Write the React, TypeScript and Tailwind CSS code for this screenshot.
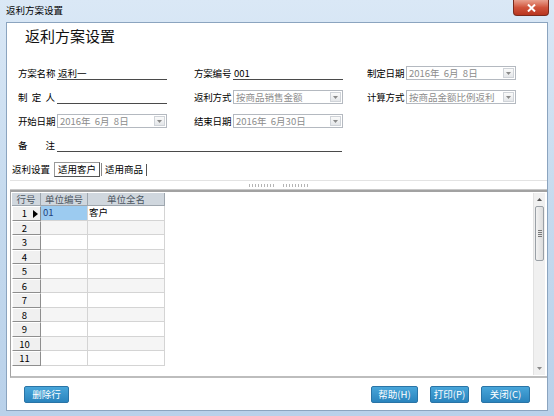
import type { ReactNode } from 'react'

// Win7-style dialog: 返利方案设置

function Label({ children, spread }: { children: string; spread?: boolean }) {
  if (spread) {
    return (
      <span className="flex w-[37px] shrink-0 justify-between mr-[2px] text-[9.5px] leading-[12px] whitespace-nowrap">
        {children.split('').map((c, i) => (
          <span key={i}>{c}</span>
        ))}
      </span>
    )
  }
  return <span className="w-[39px] shrink-0 text-[9.5px] leading-[12px] whitespace-nowrap tracking-[-0.2px]">{children}</span>
}

function Line({ value, width = 'w-[110px]' }: { value?: string; width?: string }) {
  return (
    <div className={`${width} h-[13px] border-b border-[#4a4a4a] text-[9.5px] leading-[12px] pl-[1px] text-black whitespace-nowrap`}>
      {value}
    </div>
  )
}

function Arrow() {
  return (
    <svg width="5" height="3" viewBox="0 0 5 3">
      <path d="M0 0h5L2.5 3z" fill="#8a8a8a" />
    </svg>
  )
}

function Combo({ value }: { value: string }) {
  return (
    <div className="w-[110px] h-[14px] border border-[#b4b9c0] bg-white flex items-center">
      <span className="flex-1 pl-[2px] text-[9.5px] leading-[12px] text-[#8c8c8c] whitespace-pre">{value}</span>
      <span className="w-[11px] h-[10px] mr-[1px] border border-[#cfd3d8] bg-gradient-to-b from-[#fafafa] to-[#e4e6e9] flex items-center justify-center">
        <Arrow />
      </span>
    </div>
  )
}

function Row({ children }: { children: ReactNode }) {
  return <div className="flex items-center h-[24px] pl-[11px]">{children}</div>
}

function Col({ children, w }: { children: ReactNode; w: string }) {
  return <div className={`flex items-center ${w} shrink-0`}>{children}</div>
}

function BlueButton({ children, w }: { children: string; w: string }) {
  return (
    <button
      className={`${w} h-[17px] rounded-[2px] border border-[#2a74a6] bg-gradient-to-b from-[#48a6da] to-[#2a84bd] text-[9.5px] leading-[15px] text-white whitespace-nowrap`}
    >
      {children}
    </button>
  )
}

const ROWS = Array.from({ length: 11 }, (_, i) => i + 1)

function ScrollBar() {
  return (
    <div className="w-[12px] flex flex-col bg-[#f0f0f0] border-l border-[#e2e2e2]">
      <div className="h-[13px] flex items-center justify-center">
        <svg width="5" height="3" viewBox="0 0 5 3">
          <path d="M0 3h5L2.5 0z" fill="#555" />
        </svg>
      </div>
      <div className="h-[55px] mx-[1px] rounded-[2px] border border-[#9aa0a6] bg-gradient-to-r from-[#f2f2f2] to-[#dcdcdc] flex flex-col items-center justify-center gap-[1px]">
        <span className="w-[4px] h-px bg-[#7a7a7a]" />
        <span className="w-[4px] h-px bg-[#7a7a7a]" />
        <span className="w-[4px] h-px bg-[#7a7a7a]" />
        <span className="w-[4px] h-px bg-[#7a7a7a]" />
      </div>
      <div className="flex-1" />
      <div className="h-[13px] flex items-center justify-center">
        <Arrow />
      </div>
    </div>
  )
}

function Grid() {
  const hdr =
    'h-[13px] border-r border-b border-[#9ea6ae] bg-[#d0d7de] text-[9.5px] leading-[12px] text-[#4b5560] text-center whitespace-nowrap'
  return (
    <div className="flex-1 flex flex-col">
      <div className="flex">
        <div className={`w-[29px] ${hdr}`}>行号</div>
        <div className={`w-[47px] ${hdr}`}>单位编号</div>
        <div className={`w-[77px] ${hdr}`}>单位全名</div>
      </div>
      {ROWS.map((n) => {
        const shade = n % 2 === 0 ? 'bg-[#f5f5f5]' : 'bg-white'
        return (
          <div key={n} className="flex h-[14.5px]">
            <div className="relative w-[29px] border-t border-l border-t-white border-l-white border-r border-b border-r-[#8e8e8e] border-b-[#8e8e8e] bg-[#f0f0f0] text-[9.5px] leading-[13px] text-center text-black">
              <span className="relative left-[-2px]">{n}</span>
              {n === 1 && (
                <svg className="absolute right-[2px] top-[3px]" width="5" height="8" viewBox="0 0 5 8">
                  <path d="M0 0l5 4-5 4z" fill="#000" />
                </svg>
              )}
            </div>
            <div
              className={`w-[47px] border-r border-b border-[#d4d4d4] text-[9.5px] leading-[13px] pl-[2px] ${
                n === 1 ? 'bg-[#9ccbf0] text-[#1d3f7a]' : shade
              }`}
            >
              {n === 1 ? '01' : ''}
            </div>
            <div className={`w-[77px] border-r border-b border-[#d4d4d4] text-[9.5px] leading-[13px] pl-[1px] ${shade}`}>
              {n === 1 ? '客户' : ''}
            </div>
          </div>
        )
      })}
    </div>
  )
}

export default function App() {
  return (
    <div className="w-[554px] h-[416px] flex flex-col bg-gradient-to-b from-[#dae8f6] via-[#c5daee] to-[#b9d1ea] font-['Noto_Sans_CJK_SC',sans-serif] text-black overflow-hidden">
      {/* title bar */}
      <div className="h-[22px] shrink-0 flex items-start">
        <span className="pl-[6px] pt-[4px] text-[9.5px] leading-[12px] text-black">返利方案设置</span>
        <div className="flex-1" />
        <div className="mr-[5px] w-[36px] h-[16px] rounded-b-[4px] border border-t-0 border-[#7a2a1c] bg-gradient-to-b from-[#e8a08e] via-[#d0533b] to-[#b8351e] flex items-center justify-center">
          <svg width="9" height="8" viewBox="0 0 9 8">
            <path d="M1 0.5l7 7M8 0.5l-7 7" stroke="#fff" strokeWidth="2" />
          </svg>
        </div>
      </div>

      {/* client area */}
      <div className="flex-1 mx-[6px] mb-[5px] flex flex-col bg-white border border-[#8ba4bf]">
        <div className="h-[38px] shrink-0 pl-[18px] pt-[3px] text-[15px] leading-[20px] text-[#111]">返利方案设置</div>

        <Row>
          <Col w="w-[176px]">
            <Label>方案名称</Label>
            <Line value="返利一" />
          </Col>
          <Col w="w-[173px]">
            <Label>方案编号</Label>
            <Line value="001" />
          </Col>
          <Col w="w-auto">
            <Label>制定日期</Label>
            <Combo value="2016年  6月  8日" />
          </Col>
        </Row>
        <Row>
          <Col w="w-[176px]">
            <Label spread>制定人</Label>
            <Line />
          </Col>
          <Col w="w-[173px]">
            <Label>返利方式</Label>
            <Combo value="按商品销售金额" />
          </Col>
          <Col w="w-auto">
            <Label>计算方式</Label>
            <Combo value="按商品金额比例返利" />
          </Col>
        </Row>
        <Row>
          <Col w="w-[176px]">
            <Label>开始日期</Label>
            <Combo value="2016年  6月  8日" />
          </Col>
          <Col w="w-[173px]">
            <Label>结束日期</Label>
            <Combo value="2016年  6月30日" />
          </Col>
        </Row>
        <Row>
          <Label spread>备注</Label>
          <Line width="w-[285px]" />
        </Row>

        {/* tabs */}
        <div className="mt-[5px] h-[15px] shrink-0 flex items-center pl-[5px] text-[9.5px] leading-[13px] whitespace-nowrap">
          <span className="mr-[4px]">返利设置</span>
          <span className="px-[3px] border border-t-[#9a9a9a] border-l-[#9a9a9a] border-r-[#555] border-b-[#555] bg-white">适用客户</span>
          <span className="ml-[1px] pl-[3px] pr-[3px] border-l border-[#888]">适用商品</span>
          <span className="w-px h-[12px] bg-[#555]" />
        </div>

        {/* splitter */}
        <div className="mt-[3px] ml-[3px] h-[10px] shrink-0 flex flex-col">
          <div className="h-px bg-[#e3e3e3]" />
          <div className="flex-1 flex items-center justify-center gap-[9px]">
            <span className="w-[25px] h-[3px] bg-[repeating-linear-gradient(90deg,#b5b5b5_0_1px,transparent_1px_3px)]" />
            <span className="w-[25px] h-[3px] bg-[repeating-linear-gradient(90deg,#b5b5b5_0_1px,transparent_1px_3px)]" />
          </div>
          <div className="h-px bg-[#c8c8c8]" />
        </div>

        {/* grid panel */}
        <div className="h-[188px] shrink-0 ml-[3px] flex border-t-2 border-l border-b-2 border-[#a2a2a2] border-b-[#bdbdbd] pl-[1px] pt-[1px] pb-[1px] pr-[2px]">
          <Grid />
          <ScrollBar />
        </div>

        {/* buttons */}
        <div className="flex-1 flex items-center px-[17px]">
          <BlueButton w="w-[45px]">删除行</BlueButton>
          <div className="flex-1" />
          <div className="flex gap-[12px]">
            <BlueButton w="w-[47px]">帮助(H)</BlueButton>
            <BlueButton w="w-[39px]">打印(P)</BlueButton>
            <BlueButton w="w-[49px]">关闭(C)</BlueButton>
          </div>
        </div>
      </div>
    </div>
  )
}
